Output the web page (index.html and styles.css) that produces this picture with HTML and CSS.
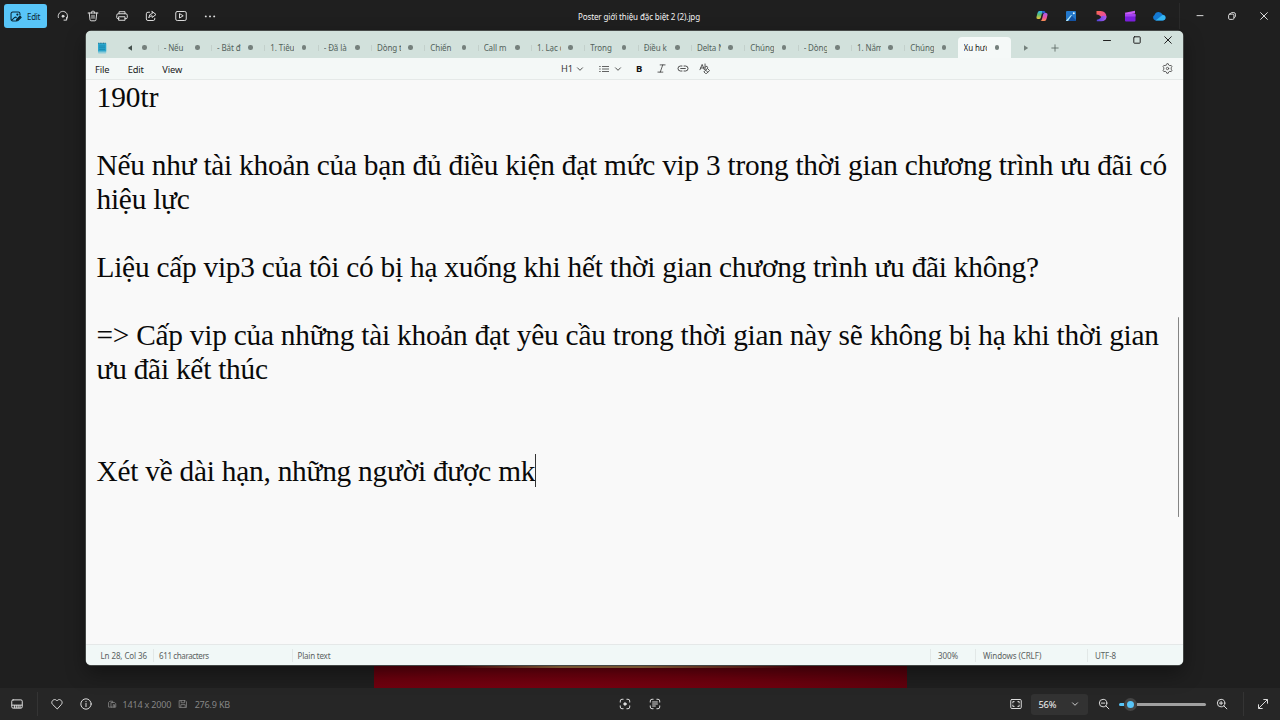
FILE: index.html
```html
<!DOCTYPE html>
<html lang="vi">
<head>
<meta charset="utf-8">
<title>Poster giới thiệu đặc biệt 2 (2).jpg</title>
<link rel="stylesheet" href="styles.css">
</head>
<body>
<div class="viewer">
  <header class="topbar">
    <div class="edit-btn">
      <svg class="ic" viewBox="0 0 16 16"><path d="M8 13.5H4.500A2 2 0 0 1 2.500 11.500V4.500A2 2 0 0 1 4.500 2.500H11.500A2 2 0 0 1 13.500 4.500V6M3.500 12.500 7 9.200Q8 8.400 9 9.200"/><path fill="currentColor" d="M9 13.500 9.600 11.300 13.500 7.500 15 9 11.200 12.900Z"/><circle cx="10.300" cy="5.600" r=".7"/></svg>
      <span>Edit</span>
    </div>
    <div class="tools">
      <svg class="ic" viewBox="0 0 16 16"><path d="M1.800 10A6.300 6.300 0 1 1 12.800 12M9.300 13.500H12.900V9.900"/><circle cx="8" cy="8.300" r="1.300" fill="currentColor"/></svg>
      <svg class="ic" viewBox="0 0 16 16"><path d="M1.500 4H14.500M6 4V3Q6 1.700 7 1.700H9Q10 1.700 10 3V4M3 4 4 13Q4.100 14.400 5.500 14.400H10.500Q11.900 14.400 12 13L13 4M6.700 7V11.200M9.300 7V11.200"/></svg>
      <svg class="ic" viewBox="0 0 16 16"><path d="M4 5V2.300H12V5M4 11.500H2.500Q1 11.500 1 10.200V7Q1 5 3 5H13Q15 5 15 7V10.200Q15 11.500 13.500 11.500H12M4 9H12V13.700H4Z"/></svg>
      <svg class="ic" viewBox="0 0 16 16"><path d="M6 3H4Q1.800 3 1.800 5V12Q1.800 14 4 14H11Q13 14 13 12V11M9.500 2 14.700 6 9.500 10V7.700Q6.500 7.500 5 10.500Q5.200 5 9.500 4.500Z"/></svg>
      <svg class="ic" viewBox="0 0 16 16"><rect x="1" y="2" width="14" height="12" rx="2"/><path d="M6 5.300V10.700L10.500 8Z"/></svg>
      <svg class="ic" viewBox="0 0 16 16"><g fill="currentColor" stroke="none"><circle cx="2.400" cy="8.500" r="1.300"/><circle cx="8" cy="8.500" r="1.300"/><circle cx="13.600" cy="8.500" r="1.300"/></g></svg>
    </div>
    <div class="file-title">Poster giới thiệu đặc biệt 2 (2).jpg</div>
    <div class="apps">
      <svg class="app" viewBox="0 0 12 12"><defs><linearGradient id="ca" x2="0" y2="1"><stop stop-color="#2bb7f5"/><stop offset=".5" stop-color="#63bd67"/><stop offset="1" stop-color="#f3c43c"/></linearGradient><linearGradient id="cb" x2="0" y2="1"><stop stop-color="#a65cf0"/><stop offset=".6" stop-color="#f0569a"/><stop offset="1" stop-color="#fb9450"/></linearGradient></defs><path fill="url(#ca)" d="M3.500 1H7.500Q6.500 1 6 3L4.700 8Q4.300 9 3 9H2Q0 9 .6 6.500L1.500 3Q2 1 3.500 1Z"/><path fill="url(#cb)" d="M8.500 11H4.500Q5.500 11 6 9L7.300 4Q7.700 3 9 3H10Q12 3 11.400 5.500L10.500 9Q10 11 8.500 11Z"/><path fill="#275ed2" d="M6 1H8Q9.300 1 9.600 3H7.400L6.500 4Z"/></svg>
      <svg class="app" viewBox="0 0 12 12"><rect x="1" y="1" width="10" height="10" rx="1" fill="#2378cc"/><path fill="#1453a4" d="M1 10 6 5 11 10V11H1Z"/><path fill="#a9e5fb" d="M1 10.500 5.700 5.200Q6.300 4.700 7 5.300L3 11H1Z"/><circle cx="8.800" cy="3.200" r="1" fill="#e8faff"/></svg>
      <svg class="app" viewBox="0 0 12 12"><defs><linearGradient id="cd" x2="1" y2=".7"><stop stop-color="#f9694b"/><stop offset="1" stop-color="#e847ae"/></linearGradient><linearGradient id="ce" x2="1" y2="0"><stop stop-color="#5146dd"/><stop offset="1" stop-color="#b05af0"/></linearGradient></defs><path fill="url(#cd)" d="M1.500 1H5.500Q11.500 1.300 11.500 7.500L6.300 7.500Q5.300 4.800 1.500 4.500Z"/><path fill="url(#ce)" d="M1.800 11.300V9.700Q5.800 9 6.400 6.200Q9 5 11.500 6.500Q11.300 11.300 6.200 11.300Z"/></svg>
      <svg class="app" viewBox="0 0 12 12"><path fill="#c55af5" d="M.8 2.800 11 .8V3.500L1.500 4.800Z"/><rect x="1" y="4" width="10.500" height="7.500" rx="1" fill="#7b20dc"/><path fill="#a541f0" d="M1 4H11.500V6.500H1Z"/></svg>
      <svg class="app wide" viewBox="0 0 14 12"><path fill="#1479d2" d="M3.500 10.500A3 3 0 0 1 2.500 5Q3.500 2 6.500 2Q9.500 2 10.500 4.500Q13.500 5 13.500 7.800Q13.300 10.500 10.500 10.500Z"/><path fill="#35b6f3" d="M3.500 10.500 10.500 5Q13.500 5 13.500 7.800Q13.300 10.500 10.500 10.500Z"/></svg>
    </div>
    <div class="sysbtns">
      <svg class="ic" viewBox="0 0 16 16"><path d="M4 7.500H12"/></svg>
      <svg class="ic" viewBox="0 0 16 16"><rect x="3.500" y="5.500" width="7" height="7" rx="1.500"/><path d="M6 4.700Q6.300 3.500 7.500 3.500H10.500Q12.500 3.500 12.500 5.500V8.500Q12.500 9.700 11.300 10"/></svg>
      <svg class="ic" viewBox="0 0 16 16"><path d="M3.500 3.500 12.500 12.500M12.500 3.500 3.500 12.500"/></svg>
    </div>
  </header>
  <main class="stage"><div class="poster"></div></main>
  <footer class="bottombar">
    <div class="film"><svg class="ic" viewBox="0 0 16 16"><rect x="1" y="2.500" width="14" height="11" rx="1.800"/><path d="M1.500 9.500H14.500M4.500 10V13M7 10V13M9.500 10V13M12 10V13"/></svg></div>
    <div class="info">
      <svg class="ic heart" viewBox="0 0 16 16"><path d="M8 14.300 1.900 8.300C-1 5 4 0 7.200 3L8 3.900 8.800 3C12 0 17 5 14.100 8.300Z"/></svg>
      <svg class="ic circle-i" viewBox="0 0 16 16"><circle cx="8" cy="8" r="6.900"/><path d="M8 7.200V11.500M8 4.500V5"/></svg>
      <svg class="ic dim" viewBox="0 0 16 16"><path d="M7 13H2.500V5.500L4.500 3.500H9V6M7 5.500H12L14 7.500V13H7ZM10 13V9H12V13"/></svg>
      <span class="size">1414 x 2000</span>
      <svg class="ic dim" viewBox="0 0 16 16"><path d="M2.500 2.500H11.500L13.500 4.500V13.500H2.500ZM5 2.500V6H10.500V2.500M4.500 13V9H11.500V13"/></svg>
      <span class="weight">276.9 KB</span>
    </div>
    <div class="scan">
      <svg class="ic" viewBox="0 0 16 16"><path d="M1.700 5.500V4Q1.700 1.700 4 1.700H5.500M10.500 1.700H12Q14.300 1.700 14.300 4V5.500M14.300 10.500V12Q14.300 14.300 12 14.300H10.500M5.500 14.300H4Q1.700 14.300 1.700 12V10.500"/><circle cx="8" cy="8" r="1.600" fill="currentColor"/></svg>
      <svg class="ic" viewBox="0 0 16 16"><path d="M1.700 5.500V4Q1.700 1.700 4 1.700H5.500M10.500 1.700H12Q14.300 1.700 14.300 4V5.500M14.300 10.500V12Q14.300 14.300 12 14.300H10.500M5.500 14.300H4Q1.700 14.300 1.700 12V10.500M4.800 5.300H11.200M4.800 8H11.200M4.800 10.700H8.500"/></svg>
    </div>
    <div class="zoomer">
      <svg class="ic fit" viewBox="0 0 16 16"><rect x="1" y="2" width="14" height="12" rx="1.500"/><path d="M3.800 6.500V4.800H5.500M10.500 4.800H12.200V6.500M12.200 9.500V11.200H10.500M5.500 11.200H3.800V9.500"/></svg>
      <div class="percent"><span>56%</span><svg class="chev" viewBox="0 0 8 8"><path d="M1.500 2.800 4 5.300 6.500 2.800"/></svg></div>
      <svg class="ic out" viewBox="0 0 16 16"><circle cx="6.800" cy="6.800" r="5"/><path d="M10.500 10.500 14.500 14.500M4.500 6.800H9"/></svg>
      <div class="slider"><i class="fill"></i><i class="knob"></i><i class="track"></i></div>
      <svg class="ic in" viewBox="0 0 16 16"><circle cx="6.800" cy="6.800" r="5"/><path d="M10.500 10.500 14.500 14.500M4.500 6.800H9M6.800 4.500V9"/></svg>
    </div>
    <div class="full"><svg class="ic" viewBox="0 0 16 16"><path d="M2.500 13.500 13.500 2.500M9 2H14V7M2 9V14H7"/></svg></div>
  </footer>
</div>

<section class="notepad">
  <div class="tabstrip">
    <svg class="logo" viewBox="0 0 10 12"><rect x="1" y="1.200" width="8.200" height="10.300" rx=".8" fill="#8ccbd8"/><rect x="1" y="1.200" width="8.200" height="8.300" fill="#2ba6cc"/><path d="M2.500 4H7.700M2.500 5.800H7.700M2.500 7.600H7.700" stroke="#1580a8" stroke-width=".7"/><path d="M1.200 1.200H9" stroke="#1b6b8a" stroke-width="1" stroke-dasharray="1 .6" stroke-linecap="butt"/></svg>
    <div class="prev"><svg viewBox="0 0 6 6"><path d="M5 .3V5.700L.8 3Z" fill="#44504c"/></svg><i></i></div>
    <div class="tab"><span>- Nếu</span><i></i></div>
    <div class="tab"><span>- Bắt đ</span><i></i></div>
    <div class="tab"><span>1. Tiêu</span><i></i></div>
    <div class="tab"><span>- Đã là</span><i></i></div>
    <div class="tab"><span>Dòng t</span><i></i></div>
    <div class="tab"><span>Chiến</span><i></i></div>
    <div class="tab"><span>Call m</span><i></i></div>
    <div class="tab"><span>1. Lạc c</span><i></i></div>
    <div class="tab"><span>Trong</span><i></i></div>
    <div class="tab"><span>Điều k</span><i></i></div>
    <div class="tab"><span>Delta N</span><i></i></div>
    <div class="tab"><span>Chúng</span><i></i></div>
    <div class="tab"><span>- Dòng</span><i></i></div>
    <div class="tab"><span>1. Nắm</span><i></i></div>
    <div class="tab"><span>Chúng</span><i></i></div>
    <div class="tab active"><span>Xu hướ</span><i></i></div>
    <svg class="next" viewBox="0 0 6 6"><path d="M1 .3V5.700L5.200 3Z" fill="#74817c"/></svg>
    <svg class="plus" viewBox="0 0 8 8"><path d="M4 .8V7.200M.8 4H7.200"/></svg>
    <div class="winbtns">
      <svg viewBox="0 0 10 10"><path d="M1.500 5.500H8.500"/></svg>
      <svg viewBox="0 0 10 10"><rect x="1.800" y="1.800" width="6.400" height="6.400" rx=".6"/></svg>
      <svg viewBox="0 0 10 10"><path d="M1.700 1.700 8.300 8.300M8.300 1.700 1.700 8.300"/></svg>
    </div>
  </div>
  <div class="menubar">
    <nav class="menus"><span>File</span><span>Edit</span><span>View</span></nav>
    <div class="format">
      <span class="h1">H1</span>
      <svg class="chev" viewBox="0 0 8 8"><path d="M1.500 2.800 4 5.300 6.500 2.800"/></svg>
      <svg class="list" viewBox="0 0 10 8"><path d="M3 1.500H10M3 4H10M3 6.500H10M.2 1.500H1.700M.2 4H1.700M.2 6.500H1.700"/></svg>
      <svg class="chev" viewBox="0 0 8 8"><path d="M1.500 2.800 4 5.300 6.500 2.800"/></svg>
      <b>B</b>
      <svg class="ital" viewBox="0 0 10 10"><path d="M3.500 1H9M1 9H6.500M6.400 1 3.600 9"/></svg>
      <svg class="link" viewBox="0 0 12 8"><path d="M5 1.500H3.500A2.500 2.500 0 0 0 3.500 6.500H5M7 1.500H8.500A2.500 2.500 0 0 1 8.500 6.500H7M3.700 4H8.300"/></svg>
      <svg class="clear" viewBox="0 0 12 12"><path d="M1 7 3.300 1.500 5.600 7M1.800 5.200H4.800M6.300 1V6.500M6.300 4.500Q7 3 8.400 3.500Q9.500 4.200 8.800 5.500M5.500 9 8.800 5.700 11 7.900 8 10.900H6.800L5.300 9.400M7 7.500 9.200 9.700"/></svg>
    </div>
    <svg class="gear" viewBox="0 0 12 12"><path d="M4.800 1.300 5.200.8H6.800L7.300 2.200 8.500 2.900 10 2.600 10.900 4.100 10 5.200V6.800L10.900 7.900 10 9.400 8.500 9.100 7.300 9.800 6.800 11.200H5.200L4.700 9.800 3.500 9.100 2 9.400 1.100 7.900 2 6.800V5.200L1.100 4.100 2 2.600 3.500 2.900 4.700 2.200Z"/><circle cx="6" cy="6" r="1.300"/></svg>
  </div>
  <div class="editor">
    <p class="short">190tr</p>
    <p><br></p>
    <p>Nếu như tài khoản của bạn đủ điều kiện đạt mức vip 3 trong thời gian chương trình ưu đãi có</p>
    <p>hiệu lực</p>
    <p><br></p>
    <p>Liệu cấp vip3 của tôi có bị hạ xuống khi hết thời gian chương trình ưu đãi không?</p>
    <p><br></p>
    <p>=&gt; Cấp vip của những tài khoản đạt yêu cầu trong thời gian này sẽ không bị hạ khi thời gian</p>
    <p>ưu đãi kết thúc</p>
    <p><br></p>
    <p><br></p>
    <p class="typing"><span>Xét về dài hạn, những người được mk</span><i class="caret"></i></p>
    <div class="scrollbar"></div>
  </div>
  <div class="status">
    <span class="pos">Ln 28, Col 36</span><span class="chars">611 characters</span><span class="type">Plain text</span><span class="pct">300%</span><span class="eol">Windows (CRLF)</span><span class="enc">UTF-8</span>
  </div>
</section>
</body>
</html>
```
FILE: styles.css
```css
* { box-sizing: border-box; }
body { margin: 0; background: #1f1f1f; overflow: hidden; font-family: "Noto Sans", "Open Sans", sans-serif; }
svg { display: block; flex: none; fill: none; stroke: currentColor; stroke-linecap: round; stroke-linejoin: round; }
span, b, p { white-space: nowrap; }
.viewer { width: 1280px; height: 720px; display: flex; flex-direction: column; color: #e0e0e0; }
.ic { width: 12px; height: 12px; stroke-width: 1.3; }

.topbar { height: 32px; flex: none; display: flex; align-items: center; padding-left: 4px; background: #1f1f1f; }
.edit-btn { width: 43px; height: 24px; border-radius: 3px; background: #58c5f8; color: #0c2836; display: flex; align-items: center; padding-left: 5px; gap: 5px; font-size: 8px; letter-spacing: -.3px; }
.edit-btn .ic { width: 13px; height: 13px; }
.tools { display: flex; margin-left: 10.300px; gap: 17.330px; }
.file-title { flex: 1; text-align: center; padding-left: 26px; font-size: 8px; letter-spacing: -.1px; color: #f2f2f2; }
.apps { display: flex; gap: 17.400px; width: 144px; height: 26px; align-items: center; border-right: 1px solid #2a2a2a; }
.app { width: 12px; height: 12px; stroke: none; }
.app.wide { width: 14px; margin-left: -1.500px; }
.sysbtns { display: flex; gap: 20px; padding: 0 10px 0 14px; }

.stage { flex: 1; display: flex; justify-content: center; align-items: flex-end; }
.poster { width: 533px; height: 22.500px; background: linear-gradient(90deg, transparent 15%, #a87745 35%, #a87745 50%, transparent 80%) 0 0 / 100% 2px no-repeat, radial-gradient(ellipse at 35% 100%, #780010 0, #6e000e 45%, #50000b 100%); }

.bottombar { height: 32px; flex: none; background: #262626; display: flex; align-items: center; font-size: 9.300px; letter-spacing: -.2px; }
.film { width: 38px; height: 24px; border-right: 1px solid #343434; display: flex; align-items: center; padding-left: 11.200px; }
.info { width: 581px; display: flex; align-items: center; padding-left: 12.500px; color: #858585; }
.info .heart, .info .circle-i { color: #e0e0e0; }
.circle-i { margin-left: 17px; }
.dim { width: 10px; height: 10px; margin-left: 15.500px; margin-right: 5.500px; }
.size + .dim { margin-left: 7px; margin-right: 6.500px; }
.size, .weight { font-size: 9px; letter-spacing: -.18px; }
.scan { display: flex; gap: 17.500px; flex: 1; }
.zoomer { display: flex; align-items: center; width: 233px; }
.fit { margin-right: 9px; }
.percent { width: 57px; height: 21px; background: #323232; border-radius: 3px; display: flex; align-items: center; justify-content: space-between; padding: 0 9px 0 7.500px; color: #f2f2f2; }
.chev { width: 8px; height: 8px; stroke-width: .8; }
.out { margin-left: 9.500px; margin-right: 9.500px; }
.slider { width: 87px; display: flex; align-items: center; }
.fill { width: 5px; height: 3px; background: #58c5f8; border-radius: 2px 0 0 2px; }
.knob { width: 13px; height: 13px; border-radius: 50%; border: 3px solid #454545; background: #58c5f8; }
.track { flex: 1; height: 3px; background: #a0a0a0; border-radius: 0 2px 2px 0; }
.in { margin-left: 10px; }
.full { width: 37px; height: 24px; border-left: 1px solid #343434; display: flex; align-items: center; padding-left: 13px; }

/* Notepad window floating over the viewer */
.notepad { position: absolute; left: 86px; top: 31px; width: 1097px; height: 634px; border-radius: 5px; overflow: hidden; display: flex; flex-direction: column; background: #f9f9f9; box-shadow: 0 0 0 .5px #707875, 0 8px 20px rgba(0,0,0,.4); color: #202020; }
.tabstrip { height: 27px; flex: none; background: #d2e1dc; display: flex; align-items: flex-end; padding-left: 11px; }
.logo { width: 10px; height: 12px; margin-bottom: 4.500px; stroke: none; }
.prev { width: 50.700px; height: 21px; display: flex; align-items: center; padding-left: 20px; }
.prev svg, .next { width: 6px; height: 6px; stroke: none; }
.prev svg { margin-right: 9px; }
.tab i, .prev i { width: 4.500px; height: 4.500px; border-radius: 50%; background: #75807c; flex: none; }
.tab { width: 53.330px; height: 21px; flex: none; display: flex; align-items: center; padding-left: 6px; color: #53615b; font-size: 8px; letter-spacing: -.1px; background: linear-gradient(#c3d0cb, #c3d0cb) 0 8px / 1px 6px no-repeat; }
.tab span { width: 23.700px; overflow: hidden; margin-right: 7.700px; line-height: 14px; }
.tab.active { background: #f5f9f8; border-radius: 4px 4px 0 0; color: #1b1b1b; }
.next { margin: 0 0 7px 12.500px; }
.plus { width: 8px; height: 8px; stroke-width: .8; margin: 0 0 6.500px 21.500px; color: #54605b; }
.winbtns { display: flex; align-self: flex-start; gap: 20.300px; margin: 4px 10.500px 0 auto; }
.winbtns svg { width: 10px; height: 10px; stroke-width: 1; }
.menubar { height: 22px; flex: none; background: #f4f8f7; border-bottom: 1px solid #e5e9e8; display: flex; align-items: center; font-size: 9.300px; }
.menus { display: flex; gap: 18.500px; width: 475px; padding-left: 9px; letter-spacing: -.15px; padding-top: 1px; }
.format { flex: 1; display: flex; align-items: center; color: #3c3c3c; }
.format svg { stroke-width: .9; }
.h1 { width: 15px; letter-spacing: -.1px; }
.format .list { width: 10px; height: 8px; margin: 0 5.500px 0 14.500px; stroke-linecap: butt; stroke-width: .8; }
.format b { width: 21px; margin-left: 14px; font-size: 9.500px; color: #111; }
.ital { width: 9px; height: 9px; }
.link { width: 12px; height: 9px; margin: 0 9.500px 0 11px; }
.clear { width: 11.500px; height: 11.500px; }
.gear { width: 11px; height: 11px; margin-right: 10px; stroke-width: .9; color: #444; }
.editor { flex: 1; position: relative; padding-left: 10.500px; font: 29.330px/34px "Liberation Serif", "Times New Roman", serif; letter-spacing: -.233px; color: #090909; }
.editor p { margin: 0; height: 34px; }
.editor .short { letter-spacing: 0; }
.editor .typing { display: flex; }
.caret { width: 1px; height: 33px; background: #333; }
.scrollbar { position: absolute; right: 4px; top: 237px; width: 1.300px; height: 200px; background: #858585; border-radius: 1px; }
.status { height: 21px; flex: none; background: #f1f8f7; border-top: 1px solid #e5e8e8; display: flex; align-items: center; font-size: 8px; color: #5b6261; letter-spacing: -.1px; }
.status span { padding-left: 5px; border-left: 1px solid #e2e8e7; line-height: 13px; }
.status .pos { width: 67px; padding-left: 14.500px; border-left: 0; }
.status .chars { width: 138.500px; letter-spacing: -.38px; }
.status .type { width: 638.500px; letter-spacing: -.2px; }
.status .pct { width: 45px; padding-left: 7px; }
.status .eol { width: 112px; padding-left: 7px; }
.status .enc { padding-left: 7px; }
```
